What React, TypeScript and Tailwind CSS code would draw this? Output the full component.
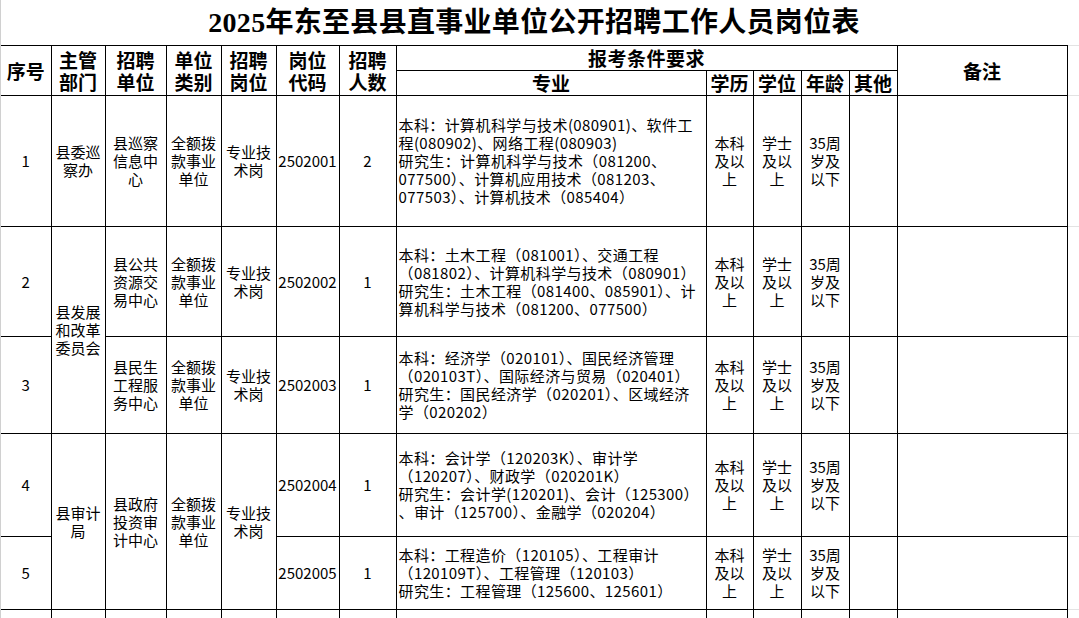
import React from "react";

type Job = {
  no: string;
  code: string;
  count: string;
  major: string[];
  height: string;
};

const edu = ["本科", "及以", "上"];
const degree = ["学士", "及以", "上"];
const age = ["35周", "岁及", "以下"];

const jobs: Job[] = [
  {
    no: "1",
    code: "2502001",
    count: "2",
    height: "h-[131px]",
    major: [
      "本科：计算机科学与技术(080901)、软件工",
      "程(080902)、网络工程(080903)",
      "研究生：计算机科学与技术（081200、",
      "077500）、计算机应用技术（081203、",
      "077503）、计算机技术（085404）",
    ],
  },
  {
    no: "2",
    code: "2502002",
    count: "1",
    height: "h-[110px]",
    major: [
      "本科：土木工程（081001）、交通工程",
      "（081802）、计算机科学与技术（080901）",
      "研究生：土木工程（081400、085901）、计",
      "算机科学与技术（081200、077500）",
    ],
  },
  {
    no: "3",
    code: "2502003",
    count: "1",
    height: "h-[97px]",
    major: [
      "本科：经济学（020101）、国民经济管理",
      "（020103T）、国际经济与贸易（020401）",
      "研究生：国民经济学（020201）、区域经济",
      "学（020202）",
    ],
  },
  {
    no: "4",
    code: "2502004",
    count: "1",
    height: "h-[103px]",
    major: [
      "本科：会计学（120203K）、审计学",
      "（120207）、财政学（020201K）",
      "研究生：会计学(120201)、会计（125300）",
      "、审计（125700）、金融学（020204）",
    ],
  },
  {
    no: "5",
    code: "2502005",
    count: "1",
    height: "h-[73px]",
    major: [
      "本科：工程造价（120105）、工程审计",
      "（120109T）、工程管理（120103）",
      "研究生：工程管理（125600、125601）",
    ],
  },
];

function Lines({ items }: { items: string[] }) {
  return (
    <>
      {items.map((t, i) => (
        <div key={i}>{t}</div>
      ))}
    </>
  );
}

const th = "border border-black p-0 text-center align-middle font-bold text-[19px] leading-[22px]";
const td = "border border-black p-0 text-center align-middle";
const extra = "border-y border-[#e3e3e3] p-0";

export default function App() {
  return (
    <div className="w-[1079px] h-[618px] overflow-hidden bg-white border-l border-[#d0d0d0] text-black font-['Noto_Sans_CJK_SC',sans-serif]">
      <div className="h-[45px] w-[1066px] flex items-center justify-center">
        <h1 className="text-[28px] font-bold tracking-[0.3px] font-['Liberation_Serif','Noto_Sans_CJK_SC',serif]">
          2025年东至县县直事业单位公开招聘工作人员岗位表
        </h1>
      </div>

      <table className="table-fixed border-collapse w-[1078px] text-[15px] leading-[18px]">
        <colgroup>
          <col className="w-[50px]" />
          <col className="w-[54px]" />
          <col className="w-[61px]" />
          <col className="w-[55px]" />
          <col className="w-[55px]" />
          <col className="w-[63px]" />
          <col className="w-[57px]" />
          <col className="w-[310px]" />
          <col className="w-[47px]" />
          <col className="w-[48px]" />
          <col className="w-[48px]" />
          <col className="w-[48px]" />
          <col className="w-[170px]" />
          <col className="w-[12px]" />
        </colgroup>
        <thead>
          <tr className="h-[25px]">
            <th rowSpan={2} className={`${th} border-l-0`}>序号</th>
            <th rowSpan={2} className={th}>主管<br />部门</th>
            <th rowSpan={2} className={th}>招聘<br />单位</th>
            <th rowSpan={2} className={th}>单位<br />类别</th>
            <th rowSpan={2} className={th}>招聘<br />岗位</th>
            <th rowSpan={2} className={th}>岗位<br />代码</th>
            <th rowSpan={2} className={th}>招聘<br />人数</th>
            <th colSpan={5} className={`${th} tracking-[0.5px]`}>报考条件要求</th>
            <th rowSpan={2} className={th}>备注</th>
            <th rowSpan={2} className={extra}></th>
          </tr>
          <tr className="h-[25px]">
            <th className={th}>专业</th>
            <th className={th}>学历</th>
            <th className={th}>学位</th>
            <th className={th}>年龄</th>
            <th className={th}>其他</th>
          </tr>
        </thead>
        <tbody>
          {jobs.map((job, i) => (
            <tr key={job.no} className={job.height}>
              <td className={`${td} border-l-0`}>{job.no}</td>
              {i === 0 && (
                <td className={td}>
                  <Lines items={["县委巡", "察办"]} />
                </td>
              )}
              {i === 1 && (
                <td rowSpan={2} className={td}>
                  <Lines items={["县发展", "和改革", "委员会"]} />
                </td>
              )}
              {i === 3 && (
                <td rowSpan={2} className={td}>
                  <Lines items={["县审计", "局"]} />
                </td>
              )}
              {i < 3 && (
                <td className={td}>
                  <Lines
                    items={
                      [
                        ["县巡察", "信息中", "心"],
                        ["县公共", "资源交", "易中心"],
                        ["县民生", "工程服", "务中心"],
                      ][i]
                    }
                  />
                </td>
              )}
              {i === 3 && (
                <td rowSpan={2} className={td}>
                  <Lines items={["县政府", "投资审", "计中心"]} />
                </td>
              )}
              {i !== 4 && (
                <td rowSpan={i === 3 ? 2 : 1} className={td}>
                  <Lines items={["全额拨", "款事业", "单位"]} />
                </td>
              )}
              {i !== 4 && (
                <td rowSpan={i === 3 ? 2 : 1} className={td}>
                  <Lines items={["专业技", "术岗"]} />
                </td>
              )}
              <td className={td}>{job.code}</td>
              <td className={td}>{job.count}</td>
              <td className={`${td} text-left pl-[2px] whitespace-nowrap tracking-[0.4px]`}>
                <Lines items={job.major} />
              </td>
              <td className={td}>
                <Lines items={edu} />
              </td>
              <td className={td}>
                <Lines items={degree} />
              </td>
              <td className={td}>
                <Lines items={age} />
              </td>
              <td className={td}></td>
              <td className={td}></td>
              <td className={extra}></td>
            </tr>
          ))}
          <tr className="h-[40px]">
            <td className={`${td} border-l-0`}></td>
            <td className={td}></td>
            <td className={td}></td>
            <td className={td}></td>
            <td className={td}></td>
            <td className={td}></td>
            <td className={td}></td>
            <td className={td}></td>
            <td className={td}></td>
            <td className={td}></td>
            <td className={td}></td>
            <td className={td}></td>
            <td className={td}></td>
            <td className={extra}></td>
          </tr>
        </tbody>
      </table>
    </div>
  );
}
